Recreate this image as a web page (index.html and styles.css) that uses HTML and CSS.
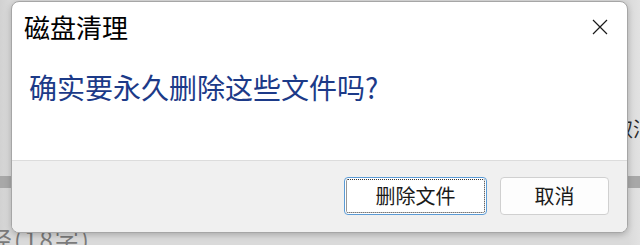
FILE: index.html
```html
<!DOCTYPE html>
<html lang="zh-CN">
<head>
<meta charset="utf-8">
<title>磁盘清理</title>
<link rel="stylesheet" href="styles.css">
</head>
<body>
<div class="backdrop">
  <div class="bg-top"></div>
  <div class="bg-row"><span class="bg-btn-text">取消</span></div>
  <div class="bg-gap"></div>
  <div class="bg-band"></div>
  <div class="bg-gap2"></div>
  <div class="bg-bottom">径(18字)</div>
</div>

<div class="dialog" role="dialog" aria-labelledby="dlg-title">
  <div class="titlebar">
    <div class="title" id="dlg-title">磁盘清理</div>
    <svg class="close" width="16" height="16" viewBox="0 0 16 16" aria-label="关闭">
      <path d="M1 1 L15 15 M15 1 L1 15" stroke="#1a1a1a" stroke-width="1.2" fill="none"/>
    </svg>
  </div>
  <div class="message">确实要永久删除这些文件吗?</div>
  <div class="spacer"></div>
  <div class="footer">
    <button class="btn btn-primary">删除文件</button>
    <button class="btn">取消</button>
  </div>
</div>
</body>
</html>
```

FILE: styles.css
```css
html, body {
  margin: 0;
  padding: 0;
}
body {
  width: 640px;
  height: 245px;
  overflow: hidden;
  position: relative;
  background: #d9d9d9;
  font-family: "Noto Sans CJK SC", "Noto Sans", sans-serif;
}

.backdrop {
  display: flex;
  flex-direction: column;
  height: 245px;
  background: linear-gradient(to right, #d2d2d2 0, #dadada 11px, #dadada 628px, #e2e2e2 640px);
}
.bg-top {
  height: 117px;
  flex: none;
}
.bg-row {
  height: 24px;
  flex: none;
  padding-left: 613px;
  white-space: nowrap;
  overflow: hidden;
}
.bg-btn-text {
  font-size: 20px;
  line-height: 24px;
  color: #2a2a2a;
}
.bg-gap {
  height: 35px;
  flex: none;
}
.bg-band {
  height: 12px;
  flex: none;
  background: #a8a8a8;
}
.bg-gap2 {
  height: 38px;
  flex: none;
}
.bg-bottom {
  margin-left: -12px;
  font-size: 24px;
  line-height: 26px;
  letter-spacing: 2px;
  color: #7a7a7a;
  white-space: nowrap;
}

.dialog {
  position: absolute;
  left: 11px;
  top: 1px;
  width: 617px;
  height: 232px;
  box-sizing: border-box;
  border: 1px solid #a6a6a6;
  border-radius: 8px;
  background: #ffffff;
  display: flex;
  flex-direction: column;
  overflow: hidden;
  box-shadow: 0 2px 6px rgba(0, 0, 0, 0.22);
}

.titlebar {
  display: flex;
  justify-content: space-between;
  align-items: flex-start;
  padding: 12px 19px 0 12px;
}
.title {
  font-size: 26px;
  line-height: 26px;
  color: #000000;
}
.close {
  display: block;
  margin-top: 5px;
}

.message {
  margin-top: 33px;
  padding-left: 17px;
  font-size: 28px;
  line-height: 28px;
  color: #1c3a88;
}

.spacer {
  flex: 1;
}

.footer {
  flex: none;
  height: 72px;
  box-sizing: border-box;
  border-top: 1px solid #dcdcdc;
  background: #f0f0f0;
  display: flex;
  justify-content: flex-end;
  align-items: flex-start;
  gap: 13px;
  padding: 16px 18px 0 0;
}

.btn {
  width: 109px;
  height: 38px;
  box-sizing: border-box;
  border: 1px solid #d0d0d0;
  border-radius: 4px;
  background: #fdfdfd;
  font-family: "Noto Sans CJK SC", "Noto Sans", sans-serif;
  font-size: 20px;
  line-height: 24px;
  color: #1a1a1a;
  padding: 0;
  margin: 0;
}
.btn-primary {
  width: 143px;
  border: 1px solid #5b9bd5;
  background: #ffffff;
  outline: 1px dotted #333333;
  outline-offset: -3px;
}
```
